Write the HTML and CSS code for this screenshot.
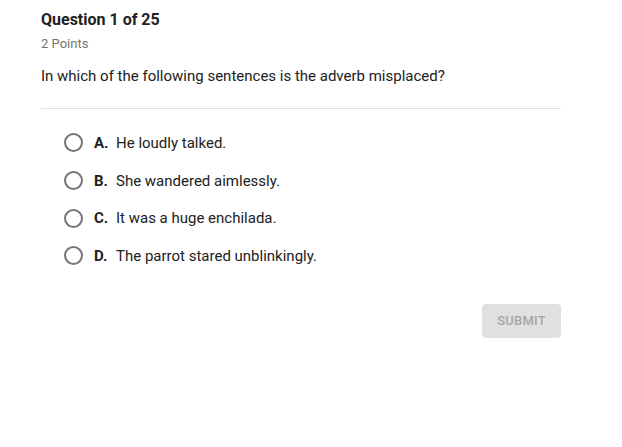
FILE: index.html
```html
<!DOCTYPE html>
<html>
<head>
<meta charset="utf-8">
<link rel="stylesheet" href="styles.css">
</head>
<body>
<div class="quiz">
  <h1 class="title">Question 1 of 25</h1>
  <div class="points">2 Points</div>
  <p class="prompt">In which of the following sentences is the adverb misplaced?</p>
  <hr class="divider">
  <ul class="options">
    <li class="option"><span class="radio"></span><b class="letter">A.</b><span class="text">He loudly talked.</span></li>
    <li class="option"><span class="radio"></span><b class="letter">B.</b><span class="text">She wandered aimlessly.</span></li>
    <li class="option"><span class="radio"></span><b class="letter">C.</b><span class="text">It was a huge enchilada.</span></li>
    <li class="option"><span class="radio"></span><b class="letter">D.</b><span class="text">The parrot stared unblinkingly.</span></li>
  </ul>
  <div class="actions"><button class="submit">SUBMIT</button></div>
</div>
</body>
</html>
```
FILE: styles.css
```css
html, body { margin: 0; padding: 0; background: #fff; }
body { font-family: Roboto, "Liberation Sans", sans-serif; color: #212121; }
.quiz { width: 520px; padding: 10px 0 0 41px; }
.title { margin: 0; font-size: 16px; line-height: 20px; font-weight: 700; color: #212121; }
.points { margin-top: 5px; font-size: 13px; line-height: 18px; color: #757575; }
.prompt { margin: 14px 0 0; font-size: 15px; line-height: 18px; color: #212121; }
.divider { margin: 23px 0 0; border: 0; border-top: 1px solid #e0e0e0; height: 0; }
.options { list-style: none; margin: 15px 0 0; padding: 0 0 0 23px; }
.option { display: flex; align-items: center; height: 37.7px; font-size: 15px; }
.radio { width: 15px; height: 15px; border: 2px solid #757575; border-radius: 50%; flex: none; margin-right: 11px; }
.letter { font-weight: 700; width: 22px; color: #212121; }
.text { color: #212121; }
.actions { display: flex; justify-content: flex-end; margin-top: 29px; }
.submit { width: 79px; height: 34px; border: 0; border-radius: 4px; background: #e0e0e0; color: #a6a6a6; font-family: Roboto, "Liberation Sans", sans-serif; font-size: 13px; font-weight: 500; letter-spacing: 0.2px; padding: 0; }
```
